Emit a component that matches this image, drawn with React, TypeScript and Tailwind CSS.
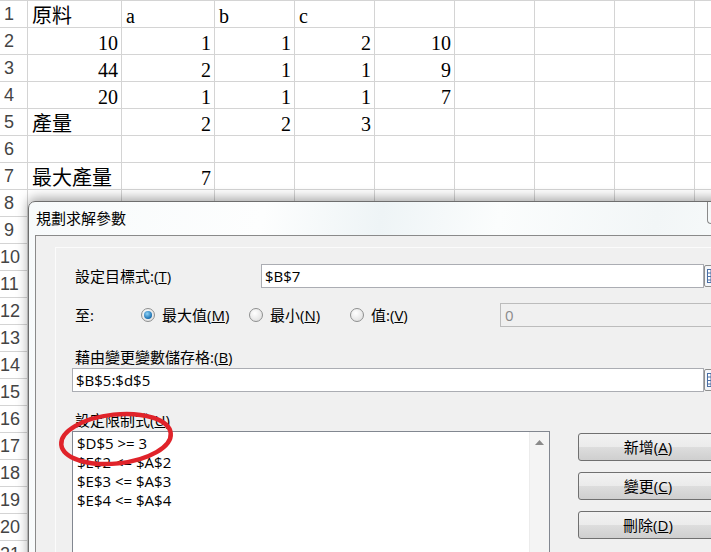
import React from "react";

type Cell = string | number | null;

const sheet: Cell[][] = [
  ["原料", "a", "b", "c"],
  [10, 1, 1, 2, 10],
  [44, 2, 1, 1, 9],
  [20, 1, 1, 1, 7],
  ["產量", 2, 2, 3],
  [],
  ["最大產量", 7],
];

const ROWS = 21;
const COLS = 8;

const constraints = ["$D$5 >= 3", "$E$2 <= $A$2", "$E$3 <= $A$3", "$E$4 <= $A$4"];

function Radio({ checked }: { checked?: boolean }) {
  return (
    <span className="flex h-[14px] w-[14px] shrink-0 items-center justify-center rounded-full border border-[#8e8f8f] bg-[radial-gradient(circle_at_40%_35%,#ffffff,#d9d9d9)]">
      {checked && (
        <span className="h-[8px] w-[8px] rounded-full bg-[radial-gradient(circle_at_40%_35%,#8fd3f7,#1a6fb0_70%,#0d3f6e)]" />
      )}
    </span>
  );
}

function RangeButton() {
  return (
    <div className="flex h-[22px] w-[18px] shrink-0 items-center justify-center rounded-[2px] border border-[#8e8f8f] bg-[#f4f6f9]">
      <svg width="12" height="14" viewBox="0 0 12 14">
        <rect x="0.5" y="0.5" width="11" height="13" fill="#ffffff" stroke="#4a6fa5" />
        <line x1="0.5" y1="4" x2="11.5" y2="4" stroke="#4a6fa5" />
        <line x1="0.5" y1="7.5" x2="11.5" y2="7.5" stroke="#4a6fa5" />
        <line x1="0.5" y1="11" x2="11.5" y2="11" stroke="#4a6fa5" />
        <line x1="4" y1="0.5" x2="4" y2="13.5" stroke="#4a6fa5" />
      </svg>
    </div>
  );
}

function WinButton({ children }: { children: React.ReactNode }) {
  return (
    <div className="flex h-[28px] w-[140px] items-center justify-center rounded-[3px] border border-[#707070] bg-[linear-gradient(to_bottom,#f2f2f2_0%,#ebebeb_50%,#dddddd_51%,#cfcfcf_100%)] text-[15px] text-black">
      {children}
    </div>
  );
}

function Spreadsheet() {
  return (
    <div className="grid grid-cols-[28px_94px_93px_repeat(7,80px)] border-t border-[#d4d4d4] bg-white">
      {Array.from({ length: ROWS }).map((_, r) => (
        <React.Fragment key={r}>
          <div
            className={`flex h-[27px] items-center border-r border-b border-[#d4d4d4] font-['Liberation_Sans',sans-serif] text-[18px] text-[#444444] ${
              r < 9 ? "pl-[4px]" : "pl-0"
            }`}
          >
            {r + 1}
          </div>
          {Array.from({ length: COLS + 1 }).map((_, c) => {
            const v = sheet[r]?.[c];
            const isNum = typeof v === "number";
            return (
              <div
                key={c}
                className={`h-[27px] overflow-visible whitespace-nowrap border-r border-b border-[#d4d4d4] pt-[5px] font-['Liberation_Serif','Noto_Sans_CJK_TC',serif] text-[20px] leading-[20px] text-black ${
                  isNum ? "pr-[3px] text-right" : "pl-[4px] text-left"
                }`}
              >
                {v ?? ""}
              </div>
            );
          })}
        </React.Fragment>
      ))}
    </div>
  );
}

function SolverDialog() {
  return (
    <div className="absolute left-[28px] top-[201px] h-[400px] w-[720px] rounded-tl-[7px] border border-[#6e6e6e] bg-[linear-gradient(100deg,#f7fafb_0%,#fdfefe_30%,#eef4f6_45%,#fbfdfd_60%,#f2f6f7_80%,#fcfdfd_100%)] font-['Open_Sans','Noto_Sans_CJK_TC',sans-serif] text-[15px] text-black shadow-[0_-3px_12px_rgba(0,0,0,0.35)]">
      <div className="flex h-[33px]">
        <div className="w-[679px] self-center pl-[7px] pb-[1px]">規劃求解參數</div>
        <div className="h-[22px] w-[40px] rounded-bl-[4px] border-l border-b border-[#8a8a8a]" />
      </div>
      <div className="ml-[6px] h-full border-t border-l border-[#8a8a8a] bg-[#f0f0f0]">
        <div className="ml-[19px] mt-[11px] h-full border-t border-l border-[#fbfbfb]">
          <div className="mt-[16px] flex h-[24px] items-center">
            <div className="w-[205px] pl-[19px]">
              設定目標式:(<u>T</u>)
            </div>
            <div className="flex h-[24px] w-[443px] items-center border border-[#abadb3] bg-white pl-[3px]">
              $B$7
            </div>
            <RangeButton />
          </div>

          <div className="mt-[15px] flex h-[24px] items-center">
            <div className="w-[85px] shrink-0 pl-[19px]">至:</div>
            <div className="flex w-[108px] shrink-0 items-center gap-[7px]">
              <Radio checked />
              <span>
                最大值(<u>M</u>)
              </span>
            </div>
            <div className="flex w-[101px] shrink-0 items-center gap-[7px]">
              <Radio />
              <span>
                最小(<u>N</u>)
              </span>
            </div>
            <div className="flex w-[150px] shrink-0 items-center gap-[7px]">
              <Radio />
              <span>
                值:(<u>V</u>)
              </span>
            </div>
            <div className="flex h-[24px] w-[260px] shrink-0 items-center border border-[#bcbcbc] bg-[#f0f0f0] pl-[4px] text-[#8a8a8a]">
              0
            </div>
          </div>

          <div className="mt-[21px] h-[18px] pl-[19px] leading-[18px]">
            藉由變更變數儲存格:(<u>B</u>)
          </div>
          <div className="mt-[2px] flex items-center pl-[16px]">
            <div className="flex h-[24px] w-[632px] items-center border border-[#abadb3] bg-white pl-[3px]">
              $B$5:$d$5
            </div>
            <RangeButton />
          </div>

          <div className="mt-[19px] h-[18px] pl-[19px] leading-[18px]">
            設定限制式(<u>U</u>)
          </div>

          <div className="mt-[2px] flex items-start pl-[16px]">
            <div className="flex h-[200px] w-[478px] border border-[#828790] bg-white">
              <div className="flex-1 pl-[4px] pt-[2px] leading-[19px]">
                {constraints.map((c) => (
                  <div key={c}>{c}</div>
                ))}
              </div>
              <div className="flex w-[20px] justify-center border-l border-[#ececec] bg-[#f4f4f4] pt-[8px]">
                <svg width="9" height="5" viewBox="0 0 9 5">
                  <path d="M0 5 L4.5 0 L9 5 Z" fill="#8a8a8a" />
                </svg>
              </div>
            </div>
            <div className="ml-[28px] mt-[2px] flex flex-col gap-[11px]">
              <WinButton>
                新增(<u>A</u>)
              </WinButton>
              <WinButton>
                變更(<u>C</u>)
              </WinButton>
              <WinButton>
                刪除(<u>D</u>)
              </WinButton>
            </div>
          </div>
        </div>
      </div>
    </div>
  );
}

export default function App() {
  return (
    <div className="relative h-[552px] w-[711px] overflow-hidden bg-white">
      <Spreadsheet />
      <SolverDialog />
      {/* red marker around the first constraint */}
      <svg
        className="pointer-events-none absolute left-[50px] top-[400px]"
        width="140"
        height="80"
        viewBox="0 0 140 80"
      >
        <ellipse
          cx="66"
          cy="39"
          rx="55"
          ry="24.5"
          transform="rotate(-6 66 39)"
          fill="none"
          stroke="#e0232a"
          strokeWidth="4.5"
        />
      </svg>
    </div>
  );
}
